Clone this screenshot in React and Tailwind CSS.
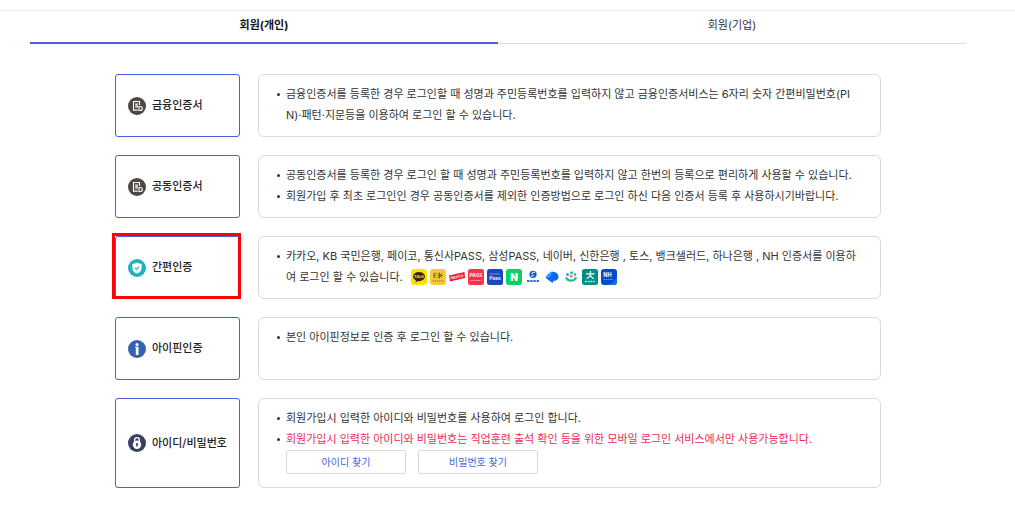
import React, { useState } from 'react';

function DocumentIcon() {
  return (
    <svg className="size-[18px] shrink-0" viewBox="0 0 18 18" aria-hidden="true">
      <circle cx="9" cy="9" r="9" fill="#4b4846" />
      <path d="M11.500 8V4.500h-6v8.600h4.300" fill="none" stroke="#fff" strokeWidth="1.100" />
      <path d="M7.200 6.300h2.700v4.500H7.200z" fill="#cfcdcc" />
      <path d="M11 9.500h1.300a1.200 1.200 0 0 1 0 4H11z" fill="none" stroke="#fff" strokeWidth="1.100" />
    </svg>
  );
}

function ShieldIcon() {
  return (
    <svg className="size-[18px] shrink-0" viewBox="0 0 18 18" aria-hidden="true">
      <circle cx="9" cy="9" r="9" fill="#1fb3be" />
      <path d="M9 3.600c1.600 1 3 1.400 4.600 1.500v3.800c0 2.700-1.800 4.500-4.600 5.600-2.800-1.100-4.600-2.900-4.600-5.600V5.100C6 5 7.400 4.600 9 3.600z" fill="#fff" />
      <path d="M7 8.800l1.500 1.500 2.700-2.700" fill="none" stroke="#1fb3be" strokeWidth="1.200" />
    </svg>
  );
}

function PinIcon() {
  return (
    <svg className="size-[18px] shrink-0" viewBox="0 0 18 18" aria-hidden="true">
      <circle cx="9" cy="9" r="9" fill="#3562b0" />
      <circle cx="9" cy="4.400" r="1.500" fill="#fff" />
      <path d="M7 6.700h3.500v8.300H7.800V7.600H7z" fill="#fff" />
    </svg>
  );
}

function LockIcon() {
  return (
    <svg className="size-[18px] shrink-0" viewBox="0 0 18 18" aria-hidden="true">
      <circle cx="9" cy="9" r="9" fill="#3a4060" />
      <path d="M6.600 8V6a2.400 2.400 0 0 1 4.800 0v2" fill="none" stroke="#fff" strokeWidth="1.300" />
      <circle cx="9" cy="10.800" r="4.200" fill="#fff" />
      <path d="M9 9a1.200 1.200 0 0 1 .6 2.200v1.500H8.400v-1.500A1.200 1.200 0 0 1 9 9z" fill="#3a4060" />
    </svg>
  );
}

function Provider({ name, children }) {
  return (
    <svg className="size-4" viewBox="0 0 16 16" role="img" aria-label={name} fontFamily="Inter, sans-serif" fontWeight="700" textAnchor="middle">
      {children}
    </svg>
  );
}

function Providers() {
  return (
    <span className="ml-2 inline-flex gap-[3px] pt-px align-text-bottom -mb-px">
      <Provider name="카카오">
        <rect width="16" height="16" rx="3.500" fill="#fbe300" />
        <ellipse cx="8" cy="7.600" rx="6" ry="4.600" fill="#3b2413" />
        <path d="M5 10.500l-.4 3 3-2z" fill="#3b2413" />
        <text x="8" y="9" fontSize="3.800" fill="#fbe300">TALK</text>
      </Provider>
      <Provider name="KB 국민은행">
        <rect width="16" height="16" rx="3" fill="#f9cb3c" />
        <path d="M4 3.500v5.500M7 4L4 6.500 6.500 9M9.500 3.500v6M7.500 6.500h5.500M8 4.200l3.800 4.600M12 4.200L8 9" fill="none" stroke="#6b5836" strokeWidth="0.9" />
        <path d="M2.500 12h11" stroke="#8d7434" strokeWidth="1.200" strokeDasharray="1.500 .5" />
      </Provider>
      <Provider name="페이코">
        <path d="M0 6.500L15.500 3l.5 6L1 12.500z" fill="#ed1c2e" />
        <text x="8" y="9.300" fontSize="3.800" fill="#fff" transform="rotate(-12 8 8)">PAYCO</text>
      </Provider>
      <Provider name="통신사PASS">
        <rect width="16" height="16" rx="2.500" fill="#fb3149" />
        <text x="8" y="8" fontSize="5" fontWeight="600" fill="#fff">PASS</text>
        <path d="M2.500 11.500h11" stroke="#fda0aa" strokeWidth="1.200" strokeDasharray="2 .6" />
      </Provider>
      <Provider name="삼성PASS">
        <rect width="16" height="16" rx="2.500" fill="#1d45bd" />
        <path d="M3 5h10" stroke="#8da5e6" strokeWidth="1" strokeDasharray="1.500 .4" />
        <text x="8" y="11" fontSize="5" fontWeight="600" fill="#fff">Pass</text>
      </Provider>
      <Provider name="네이버">
        <rect width="16" height="16" rx="3" fill="#08d35f" />
        <text x="8" y="11.800" fontSize="10" fontWeight="900" fill="#fff">N</text>
      </Provider>
      <Provider name="신한은행">
        <circle cx="8" cy="5.300" r="3.600" fill="#1954c9" />
        <path d="M10 3.600C7.500 2.500 6 4 7.500 5.200s2 2.300-1.500 1.900" fill="none" stroke="#fff" strokeWidth="1" />
        <path d="M2 12h12" stroke="#3768d2" strokeWidth="2" strokeDasharray="2.400 .8" />
      </Provider>
      <Provider name="토스">
        <path d="M1.500 8.500C2.500 6 6 2.500 9 2.200l1.500 8L8 12.500z" fill="#2fa3fb" />
        <path d="M7.500 3.500c3-1.500 7 .7 7 4.300 0 3-2.500 4-5 4.200L8.500 14C7 13 4 11 1.500 8.500 6 9 8 7 7.500 3.500z" fill="#0a68f3" />
      </Provider>
      <Provider name="뱅크샐러드">
        <circle cx="4.500" cy="5.500" r="1.500" fill="#25a8e8" />
        <circle cx="8.500" cy="3.800" r="1.500" fill="#1bbfae" />
        <path d="M6.500 6.200c2-.6 3 .2 3.300 2.200-2 .6-3-.2-3.300-2.200z" fill="#ff6184" />
        <circle cx="12" cy="5.500" r="1.300" fill="#25bd73" />
        <path d="M3.500 9.200c1.500 3.200 7.500 3.200 9.300 0" fill="none" stroke="#18c48c" strokeWidth="2.200" strokeLinecap="round" />
      </Provider>
      <Provider name="하나은행">
        <rect width="16" height="16" rx="2.500" fill="#048c87" />
        <path d="M8.500 2v2M4 4.800h8.500M8.300 4.800c0 2.500-1.500 4-3.800 4.700M8.500 6.500c.5 1.300 1.500 2.400 3.500 3" fill="none" stroke="#fff" strokeWidth="1.200" />
        <path d="M3 12.500h10" stroke="#a5dcd8" strokeWidth="1.600" strokeDasharray="2 .6" />
      </Provider>
      <Provider name="NH 인증서">
        <rect width="16" height="16" rx="3" fill="#0648c8" />
        <path d="M16 8v5a3 3 0 0 1-3 3H3c6 0 10-3 13-8z" fill="#0873e8" />
        <text x="6.500" y="8" fontSize="5.500" fill="#fff">NH</text>
        <path d="M2.500 10.500h10" stroke="#5792ec" strokeWidth="1" strokeDasharray="1.500 .5" />
      </Provider>
    </span>
  );
}

const methods = [
  {
    id: 'finance',
    label: '금융인증서',
    icon: <DocumentIcon />,
    notes: [{ text: '금융인증서를 등록한 경우 로그인할 때 성명과 주민등록번호를 입력하지 않고 금융인증서비스는 6자리 숫자 간편비밀번호(PIN)·패턴·지문등을 이용하여 로그인 할 수 있습니다.' }],
  },
  {
    id: 'joint',
    label: '공동인증서',
    icon: <DocumentIcon />,
    notes: [
      { text: '공동인증서를 등록한 경우 로그인 할 때 성명과 주민등록번호를 입력하지 않고 한번의 등록으로 편리하게 사용할 수 있습니다.' },
      { text: '회원가입 후 최초 로그인인 경우 공동인증서를 제외한 인증방법으로 로그인 하신 다음 인증서 등록 후 사용하시기바랍니다.' },
    ],
  },
  {
    id: 'simple',
    label: '간편인증',
    icon: <ShieldIcon />,
    marked: true,
    notes: [{ text: '카카오, KB 국민은행, 페이코, 통신사PASS, 삼성PASS, 네이버, 신한은행 , 토스, 뱅크샐러드, 하나은행 , NH 인증서를 이용하여 로그인 할 수 있습니다.', extra: <Providers /> }],
  },
  {
    id: 'ipin',
    label: '아이핀인증',
    icon: <PinIcon />,
    notes: [{ text: '본인 아이핀정보로 인증 후 로그인 할 수 있습니다.' }],
  },
  {
    id: 'password',
    label: '아이디/비밀번호',
    icon: <LockIcon />,
    notes: [
      { text: '회원가입시 입력한 아이디와 비밀번호를 사용하여 로그인 합니다.' },
      { text: '회원가입시 입력한 아이디와 비밀번호는 직업훈련 출석 확인 등을 위한 모바일 로그인 서비스에서만 사용가능합니다.', alert: true },
    ],
    actions: ['아이디 찾기', '비밀번호 찾기'],
  },
];

function Method({ method }) {
  return (
    <li className={`flex gap-[18px] ${method.actions ? 'min-h-[90px]' : 'min-h-[63px]'}`}>
      <div className="relative flex w-[125px] shrink-0">
        <button type="button" className="flex w-full items-center gap-[6px] rounded-[3px] border border-[#4a5fdc] pl-3 text-left font-medium text-[#222]">
          {method.icon}
          <span>{method.label}</span>
        </button>
        {method.marked && <div className="pointer-events-none absolute -top-[3px] -right-px bottom-0 -left-[3px] border-3 border-[#fb0007]"></div>}
      </div>
      <div className="min-w-0 flex-1 rounded-md border border-[#dadada] py-[9px] pr-[18px] pl-[18px]">
        <ul>
          {method.notes.map(n => (
            <li key={n.text} className="flex gap-[6px] leading-[21px] break-all before:mt-[9px] before:size-[3px] before:shrink-0 before:rounded-full before:bg-[#333] before:content-['']">
              <div className={n.alert ? 'text-[#ee2a55]' : ''}>{n.text}{n.extra}</div>
            </li>
          ))}
        </ul>
        {method.actions && (
          <div className="flex gap-3 pl-[9px]">
            {method.actions.map(a => (
              <button key={a} type="button" className="h-6 w-[120px] rounded-xs border border-[#dadada] text-[10px] text-[#4a5fdc]">{a}</button>
            ))}
          </div>
        )}
      </div>
    </li>
  );
}

export default function App() {
  const [tab, setTab] = useState('회원(개인)');

  return (
    <div className="bg-white pt-[10px] font-[Inter,'Noto_Sans_CJK_KR',sans-serif] text-[11px] text-[#333]">
      <main className="border-t border-[#ececec] pr-[49px] pb-5 pl-[30px]">
        <div role="tablist" className="grid h-[33px] grid-cols-2">
          {['회원(개인)', '회원(기업)'].map(t => (
            <button key={t} type="button" role="tab" aria-selected={tab === t} onClick={() => setTab(t)}
              className={`${tab === t ? 'border-b-2 border-[#4a5fdc] pb-[2px] font-bold text-[#111]' : 'border-b border-[#dadada] pb-[3px]'}`}>
              {t}
            </button>
          ))}
        </div>
        <ul className="mx-auto mt-[30px] flex max-w-[766px] flex-col gap-[18px]">
          {methods.map(m => <Method key={m.id} method={m} />)}
        </ul>
      </main>
    </div>
  );
}
